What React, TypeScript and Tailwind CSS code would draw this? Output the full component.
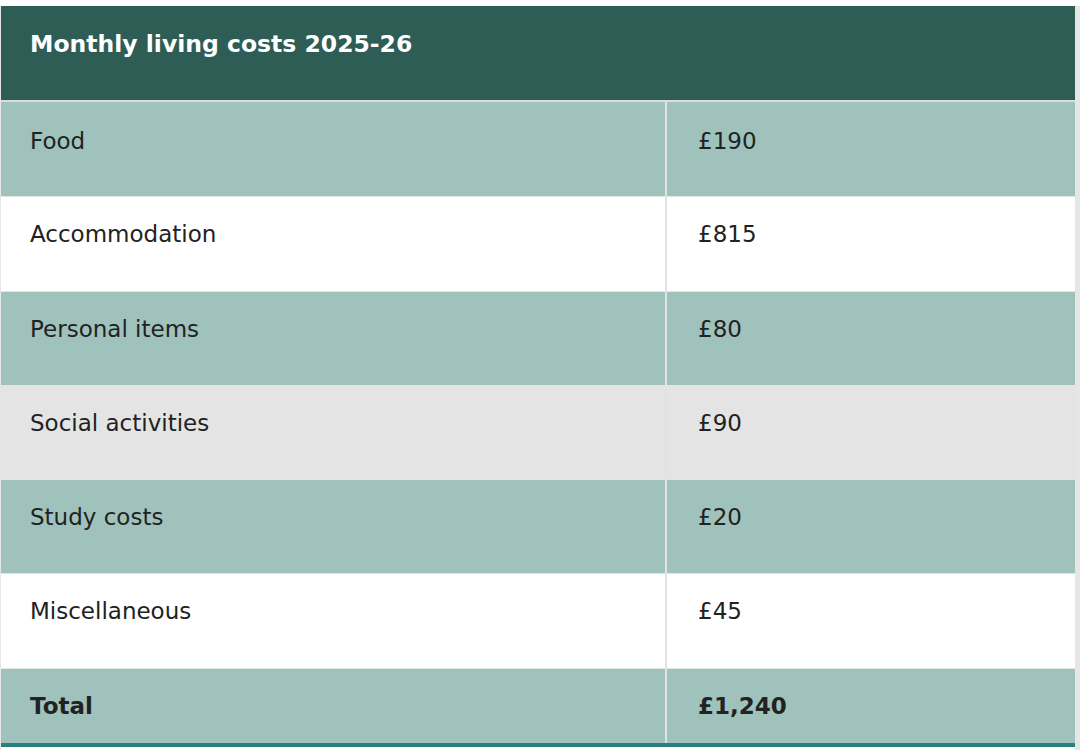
import React from "react";

const rows: { label: string; value: string; bg: string }[] = [
  { label: "Food", value: "£190", bg: "bg-[#9fc3bc]" },
  { label: "Accommodation", value: "£815", bg: "bg-white" },
  { label: "Personal items", value: "£80", bg: "bg-[#9fc3bc]" },
  { label: "Social activities", value: "£90", bg: "bg-[#e4e4e4]" },
  { label: "Study costs", value: "£20", bg: "bg-[#9fc3bc]" },
  { label: "Miscellaneous", value: "£45", bg: "bg-white" },
];

export default function App() {
  return (
    <div className="w-[1080px] h-[750px] bg-white overflow-hidden pt-[6px] flex" style={{ fontFamily: '"DejaVu Sans", Verdana, sans-serif' }}>
      <div className="w-[1075px] border-l border-[#e6e6e6] flex flex-col">
        <div className="h-[94px] shrink-0 bg-[#2e5d56] text-white font-bold text-[23.5px] pl-[29px] pt-[23px] leading-[30px]">
          Monthly living costs 2025-26
        </div>
        <div className="h-[2px] shrink-0 bg-[#dcdcdc]" />
        {rows.map((r, i) => (
          <div key={r.label} className={`flex shrink-0 h-[94.3px] ${r.bg} text-[#222] text-[23px] leading-[28px] ${i > 0 ? "border-t border-[#dfe6e4]" : ""}`}>
            <div className={`w-[664px] pl-[29px] ${i > 0 ? "pt-[23px]" : "pt-[24.5px]"}`}>{r.label}</div>
            <div className={`flex-1 pl-[31px] border-l-2 border-[#e2e2e2] ${i > 0 ? "pt-[23px]" : "pt-[24.5px]"}`}>{r.value}</div>
          </div>
        ))}
        <div className="flex shrink-0 h-[79px] bg-[#9fc3bc] text-[#222] text-[23px] leading-[28px] font-bold border-t border-[#dfe6e4] border-b-4 border-b-[#2a8080] overflow-hidden">
          <div className="w-[664px] pl-[29px] pt-[23px]">Total</div>
          <div className="flex-1 pl-[31px] pt-[23px] border-l-2 border-[#e2e2e2]">£1,240</div>
        </div>
      </div>
      <div className="w-[5px] h-full bg-[#e6e6e6]" />
    </div>
  );
}
